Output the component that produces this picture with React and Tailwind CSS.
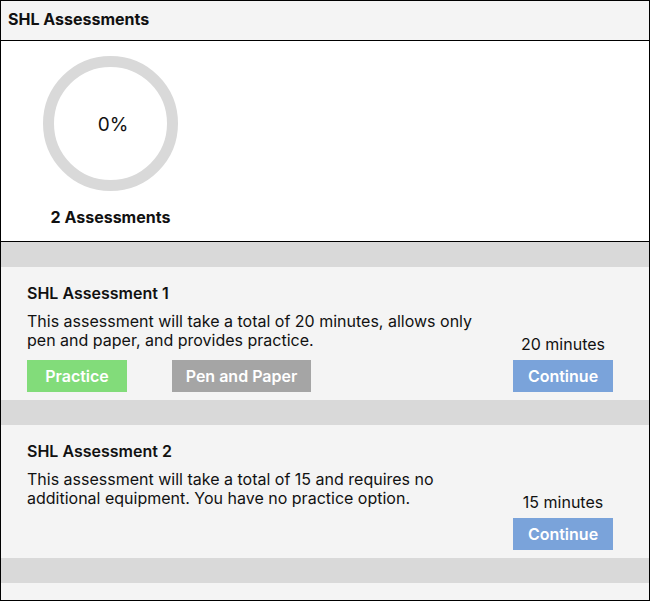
const assessments = [
  {
    title: 'SHL Assessment 1',
    text: 'This assessment will take a total of 20 minutes, allows only pen and paper, and provides practice.',
    minutes: '20 minutes',
    practice: true,
    penPaper: true,
  },
  {
    title: 'SHL Assessment 2',
    text: 'This assessment will take a total of 15 and requires no additional equipment. You have no practice option.',
    minutes: '15 minutes',
  },
];

export default function App() {
  return (
    <div className="w-[650px] h-[601px] border border-black bg-[#f4f4f4] text-[#111] overflow-hidden font-['Inter','Liberation_Sans',sans-serif]">
      {/* Header */}
      <div className="h-[40px] border-b border-black flex items-center px-[7px] pb-[3px]">
        <h1 className="text-[16px] font-bold">SHL Assessments</h1>
      </div>

      {/* Progress */}
      <div className="h-[201px] bg-white border-b border-black flex flex-col items-start pl-[42px] pt-[15px]">
        <div className="w-[135px] flex flex-col items-center">
          <div className="w-[135px] h-[135px] rounded-full border-[11px] border-[#d9d9d9] flex items-center justify-center">
            <span className="text-[19px] pl-[5px] pt-[3px]">0%</span>
          </div>
          <div className="mt-[14px] text-[16px] font-bold">2 Assessments</div>
        </div>
      </div>

      {assessments.map((a) => (
        <div key={a.title}>
          <div className="h-[25px] bg-[#d9d9d9]" />
          <AssessmentCard {...a} />
        </div>
      ))}
      <div className="h-[25px] bg-[#d9d9d9]" />
    </div>
  );
}

function AssessmentCard({ title, text, minutes, practice, penPaper }) {
  return (
    <div className="h-[133px] flex pl-[26px] pr-[36px] pt-[17px] pb-[8px]">
      <div className="flex-1 flex flex-col">
        <h2 className="text-[16px] font-semibold leading-[19px]">{title}</h2>
        <p className="mt-[9px] text-[16px] leading-[19px] w-[452px]">{text}</p>
        <div className="mt-auto flex gap-[45px]">
          {practice && (
            <button className="w-[100px] h-[32px] bg-[#82dc7a] text-white text-[16px] font-semibold">Practice</button>
          )}
          {penPaper && (
            <button className="w-[139px] h-[32px] bg-[#a5a5a5] text-white text-[16px] font-semibold">Pen and Paper</button>
          )}
        </div>
      </div>
      <div className="w-[100px] flex flex-col justify-end items-center">
        <span className="text-[16px] leading-[19px] mb-[6px]">{minutes}</span>
        <button className="w-[100px] h-[32px] bg-[#7aa3da] text-white text-[16px] font-semibold">Continue</button>
      </div>
    </div>
  );
}
